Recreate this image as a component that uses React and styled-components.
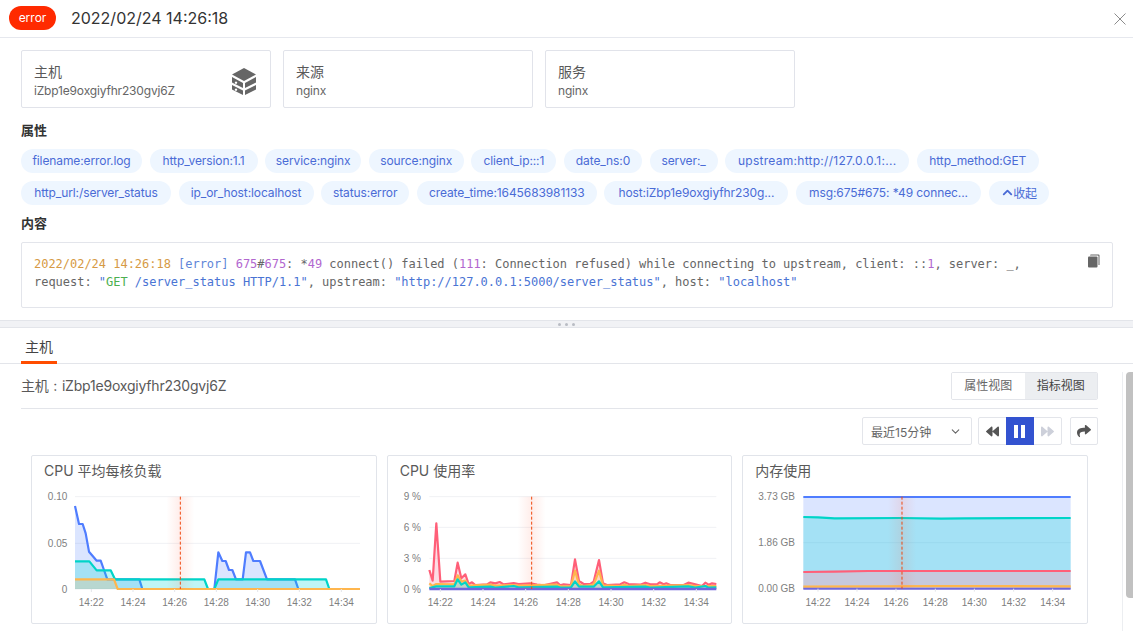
import React from 'react'
import styled, { createGlobalStyle } from 'styled-components'
import { FaBackward, FaForward, FaShare } from 'react-icons/fa'
import { ChevronDown, ChevronUp } from 'lucide-react'

const GlobalStyle = createGlobalStyle`
  html, body { margin: 0; padding: 0; background: #fff; }
  body { font-family: Inter, "Noto Sans CJK SC", sans-serif; color: #333; }
  * { box-sizing: border-box; }
`

const Page = styled.div`
  width: 1133px;
  height: 631px;
  overflow: hidden;
  display: flex;
  flex-direction: column;
`
const Header = styled.header`
  height: 38px;
  flex: none;
  display: flex;
  align-items: center;
  padding: 0 7px 2px 9px;
  border-bottom: 1px solid #e6e8ee;
`
const ErrorPill = styled.span`
  width: 47px;
  height: 24px;
  border-radius: 12px;
  background: #ff2a00;
  color: #fff;
  font-size: 12px;
  display: flex;
  align-items: center;
  justify-content: center;
`
const Stamp = styled.span`
  margin-left: 15px;
  font-size: 16px;
  color: #333;
`
const Close = styled.svg`
  margin-left: auto;
  margin-top: 2px;
  width: 12px;
  height: 12px;
`
const Detail = styled.section`
  flex: none;
  height: 282px;
  padding: 12px 20px 0 21px;
`
const InfoRow = styled.div`
  display: flex;
  gap: 12px;
`
const InfoCard = styled.div`
  width: 250px;
  height: 58px;
  border: 1px solid #e1e3ea;
  border-radius: 2px;
  padding: 12px 12px 0;
  position: relative;
`
const InfoTitle = styled.div`
  font-size: 14px;
  line-height: 18px;
  color: #595959;
`
const InfoValue = styled.div`
  margin-top: 1px;
  font-size: 12px;
  line-height: 18px;
  letter-spacing: -0.17px;
  color: #666;
`
const CubeIcon = styled.svg`
  position: absolute;
  right: 13px;
  top: 17px;
  width: 26px;
  height: 27px;
`
const SectionTitle = styled.h4`
  margin: ${(p) => p.$top}px 0 0;
  font-size: 13px;
  line-height: 18px;
  font-weight: 600;
  color: #333;
`
const Tags = styled.div`
  display: flex;
  flex-wrap: wrap;
  gap: 8px 7.6px;
  margin-top: 10px;
`
const Tag = styled.span`
  width: ${(p) => p.$w}px;
  height: 24px;
  padding-bottom: 1px;
  border-radius: 12px;
  background: #eef6ff;
  color: #4a6bd6;
  font-size: 12px;
  letter-spacing: ${(p) => p.$spread || -0.1}px;
  white-space: nowrap;
  display: inline-flex;
  align-items: center;
  justify-content: center;
`
const CollapseIcon = styled(ChevronUp)`
  margin-right: -2px;
`
const CodeBox = styled.div`
  position: relative;
  margin-top: 10px;
  height: 66px;
  border: 1px solid #e3e5eb;
  border-radius: 2px;
  padding: 12px 12px 0;
  font-family: "DejaVu Sans Mono", monospace;
  font-size: 12px;
  line-height: 18px;
  letter-spacing: -0.022px;
  color: #666;
  white-space: pre;
`
const CopyIcon = styled.svg`
  position: absolute;
  top: 11px;
  right: 12px;
  width: 13px;
  height: 14px;
`
const Time = styled.span`color: #d69a45;`
const Level = styled.span`color: #5f86d8;`
const Num = styled.span`color: #b267cf;`
const Str = styled.span`color: #4a74d4;`
const Verb = styled.span`color: #4caf50;`

const Splitter = styled.div`
  flex: none;
  height: 8px;
  background: #f1f2f5;
  border-top: 1px solid #e3e5ea;
  border-bottom: 1px solid #e3e5ea;
  display: flex;
  align-items: center;
  justify-content: center;
  gap: 4px;
`
const Dot = styled.i`
  width: 3px;
  height: 3px;
  border-radius: 50%;
  background: #b9bcc4;
`
const Tabs = styled.nav`
  flex: none;
  height: 36px;
  padding-left: 21px;
  display: flex;
  align-items: flex-end;
  border-bottom: 1px solid #e3e5ea;
`
const TabItem = styled.div`
  width: 36px;
  height: 36px;
  margin-bottom: -1px;
  text-align: center;
  font-size: 14px;
  line-height: 38px;
  color: #444;
  border-bottom: 3px solid #ff4d00;
`
const Lower = styled.div`
  flex: 1;
  min-height: 0;
  display: flex;
`
const Content = styled.div`
  flex: none;
  width: 1122px;
  padding: 0 24px 0 21px;
`
const HostHead = styled.div`
  height: 45px;
  padding-top: 8px;
  display: flex;
  align-items: flex-start;
  justify-content: space-between;
  border-bottom: 1px solid #e3e5ea;
`
const HostName = styled.div`
  font-size: 14px;
  line-height: 28px;
  letter-spacing: -0.2px;
  word-spacing: 1px;
  color: #595959;
`
const ViewSwitch = styled.div`
  display: flex;
  height: 28px;
  width: 147px;
  border: 1px solid #e3e5ea;
  border-radius: 2px;
  overflow: hidden;
`
const ViewOption = styled.div`
  flex: 1;
  font-size: 12px;
  line-height: 26px;
  text-align: center;
  color: ${(p) => (p.$active ? '#444' : '#666')};
  background: ${(p) => (p.$active ? '#eceef1' : '#fff')};
`
const Controls = styled.div`
  margin-top: 8px;
  height: 28px;
  display: flex;
  justify-content: flex-end;
  gap: 8px;
`
const RangeSelect = styled.div`
  width: 110px;
  margin-right: -2px;
  border: 1px solid #e3e5ea;
  border-radius: 2px;
  padding: 0 9px 0 8px;
  display: flex;
  align-items: center;
  justify-content: space-between;
  font-size: 12px;
  color: #666;
`
const PlayGroup = styled.div`
  display: flex;
  width: 84px;
  border: 1px solid #e3e5ea;
  border-radius: 2px;
`
const PlayButton = styled.div`
  flex: 1;
  margin: ${(p) => (p.$active ? '-1px 0' : '0')};
  display: flex;
  align-items: center;
  justify-content: center;
  gap: 3px;
  background: ${(p) => (p.$active ? '#3353d0' : 'transparent')};
  color: ${(p) => (p.$muted ? '#cdd0da' : '#555')};
  font-size: 13px;
`
const PauseBar = styled.i`
  width: 4px;
  height: 13px;
  background: #fff;
`
const ShareButton = styled.div`
  width: 28px;
  border: 1px solid #e3e5ea;
  border-radius: 2px;
  display: flex;
  align-items: center;
  justify-content: center;
  color: #555;
  font-size: 14px;
`
const ChartGrid = styled.div`
  margin: 10px 10px 0 10px;
  display: grid;
  grid-template-columns: repeat(3, 1fr);
  gap: 10px;
`
const ChartCard = styled.div`
  height: 169px;
  border: 1px solid #e1e4ea;
  border-radius: 2px;
  overflow: hidden;
`
const ChartTitle = styled.div`
  height: 30px;
  padding: 5px 0 0 12px;
  font-size: 14px;
  line-height: 20px;
  color: #595959;
`
const Plot = styled.svg`
  display: block;
  font-family: "Liberation Sans", Arial, sans-serif;
  font-size: 10px;
`
const Track = styled.div`
  flex: 1;
  margin-top: 8px;
  border-left: 1px solid #eceef1;
  padding: 0 0 0 3px;
`
const Thumb = styled.div`
  width: 8px;
  height: 226px;
  background: #c1c1c1;
  border-radius: 4px 0 0 4px;
`

const tags = [
  ['filename:error.log', 121], ['http_version:1.1', 108], ['service:nginx', 96], ['source:nginx', 95], ['client_ip:::1', 85],
  ['date_ns:0', 78], ['server:_', 68], ['upstream:http://127.0.0.1:...', 184, 0.28], ['http_method:GET', 122],
  ['http_url:/server_status', 150], ['ip_or_host:localhost', 135], ['status:error', 88], ['create_time:1645683981133', 180],
  ['host:iZbp1e9oxgiyfhr230g...', 184], ['msg:675#675: *49 connec...', 185],
]
const labels = ['14:22', '14:24', '14:26', '14:28', '14:30', '14:32', '14:34']

const BLUE = { line: '#4f7dff', fill: 'rgba(74,125,255,.2)' }
const TEAL = { line: '#00d4c8', fill: 'rgba(0,214,216,.25)' }
const ORANGE = { line: '#ffb64d', fill: 'rgba(255,182,77,.22)' }
const RED = { line: '#ff5f78', fill: 'rgba(250,166,185,.4)' }
const PURPLE = { line: '#6f66dc', fill: 'none' }

const loadChart = {
  title: 'CPU 平均每核负载',
  origin: [20, 450],
  left: [165, 1020],
  axisRight: 142,
  grid: [[140, '0.10'], [280, '0.05'], [417, '0']],
  ticks: [214, 339, 464, 589, 713, 838, 964],
  marker: 481,
  series: [
    { ...BLUE, pts: [[165,168],[177,222],[188,222],[197,250],[207,305],[218,318],[230,332],[242,332],[252,360],[262,388],[358,388],[367,417],[583,417],[595,307],[607,333],[617,333],[627,360],[637,360],[648,388],[668,388],[678,307],[690,307],[700,333],[720,333],[741,388],[825,388],[835,417],[1020,417]] },
    { ...TEAL, pts: [[165,334],[208,334],[230,361],[272,361],[285,388],[553,388],[564,417],[583,417],[595,388],[918,388],[928,417],[1020,417]] },
    { ...ORANGE, pts: [[165,388],[282,388],[293,417],[1020,417]] },
  ],
}
const cpuChart = {
  title: 'CPU 使用率',
  origin: [380, 450],
  left: [147, 1008],
  axisRight: 122,
  grid: [[140, '9 %'], [232, '6 %'], [325, '3 %'], [417, '0 %']],
  ticks: [180, 308, 436, 564, 692, 820, 948],
  marker: 454,
  series: [
    { ...RED, pts: [[147,360],[157,392],[168,220],[180,395],[222,393],[232,338],[243,385],[255,373],[265,402],[275,397],[285,405],[320,403],[330,397],[345,400],[358,396],[370,403],[400,399],[415,402],[450,400],[470,404],[490,406],[530,397],[540,406],[550,403],[572,405],[584,328],[596,393],[610,402],[630,402],[640,395],[656,330],[668,400],[680,405],[720,403],[732,397],[745,402],[780,404],[795,398],[810,403],[830,403],[838,397],[850,403],[858,400],[870,405],[910,405],[924,398],[945,403],[965,408],[975,398],[985,404],[995,400],[1008,402]] },
    { ...ORANGE, pts: [[147,400],[157,408],[168,402],[222,403],[232,376],[243,395],[255,392],[265,407],[330,404],[345,407],[400,405],[415,407],[530,404],[540,409],[572,408],[584,362],[596,404],[610,408],[640,404],[656,362],[668,406],[720,408],[732,404],[745,408],[795,405],[810,408],[924,405],[945,408],[1008,408]] },
    { ...TEAL, pts: [[147,414],[168,409],[222,409],[232,388],[243,404],[255,397],[265,412],[330,410],[345,413],[400,408],[415,412],[530,410],[540,413],[572,412],[584,394],[596,410],[640,410],[656,394],[668,412],[795,410],[810,413],[924,409],[945,413],[975,408],[985,413],[1008,412]] },
    { ...PURPLE, width: 2.5, pts: [[147,417],[1008,417]] },
  ],
}
const memChart = {
  title: '内存使用',
  origin: [735, 450],
  left: [206, 1008],
  axisRight: 181,
  grid: [[140, '3.73 GB'], [278, '1.86 GB'], [416, '0.00 GB']],
  ticks: [250, 367, 484, 602, 719, 837, 954],
  marker: 502,
  series: [
    { ...BLUE, pts: [[206,141],[1008,141]] },
    { ...TEAL, pts: [[206,201],[250,202],[300,205],[500,204],[620,206],[690,205],[1008,204]] },
    { ...RED, pts: [[206,366],[300,365],[400,363],[1008,363]] },
    { ...ORANGE, pts: [[206,410],[620,408],[1008,409]] },
    { ...PURPLE, width: 2, pts: [[206,416],[1008,416]] },
  ],
}

const Chart = ({ id, data, index }) => {
  // the svg starts 31px below the card top and 1px inside its border
  const cardLeft = 31 + index * 355.67 + 1
  const ox = data.origin[0] - cardLeft
  const oy = data.origin[1] - 486
  const X = (v) => +(ox + v / 3).toFixed(2)
  const Y = (v) => +(oy + v / 3).toFixed(2)
  const base = data.grid[data.grid.length - 1][0]
  const line = (pts) => pts.map(([x, y]) => `${X(x)},${Y(y)}`).join(' ')
  return (
    <ChartCard>
      <ChartTitle>{data.title}</ChartTitle>
      <Plot width="344" height="137">
        <defs>
          <linearGradient id={id}>
            <stop offset="0" stopColor="#ff5a3c" stopOpacity="0" />
            <stop offset="0.5" stopColor="#ff5a3c" stopOpacity="0.11" />
            <stop offset="1" stopColor="#ff5a3c" stopOpacity="0" />
          </linearGradient>
        </defs>
        {data.grid.map(([y, label]) => (
          <g key={label}>
            <line x1={X(data.left[0])} x2={X(data.left[1])} y1={Y(y)} y2={Y(y)} stroke="#f0f1f4" />
            <text x={X(data.axisRight)} y={Y(y) + 3.5} textAnchor="end" fill="#808080">{label}</text>
          </g>
        ))}
        {data.series.map((s, i) => (
          <g key={i}>
            {s.fill !== 'none' && (
              <polygon
                fill={s.fill}
                points={`${line(s.pts)} ${X(s.pts[s.pts.length - 1][0])},${Y(base)} ${X(s.pts[0][0])},${Y(base)}`}
              />
            )}
            <polyline fill="none" stroke={s.line} strokeWidth={s.width || 2.2} strokeLinejoin="round" points={line(s.pts)} />
          </g>
        ))}
        <rect x={X(data.marker) - 14} y={Y(140)} width="28" height={Y(base) - Y(140)} fill={`url(#${id})`} />
        <line x1={X(data.marker)} x2={X(data.marker)} y1={Y(140)} y2={Y(base)} stroke="#f0490f" strokeDasharray="3 2" />
        {data.ticks.map((t, i) => (
          <g key={t}>
            <line x1={X(t)} x2={X(t)} y1={Y(base)} y2={Y(base) + 3} stroke="#e3e5ea" />
            <text x={X(t)} y={Y(base) + 17} textAnchor="middle" fill="#808080">{labels[i]}</text>
          </g>
        ))}
      </Plot>
    </ChartCard>
  )
}

export default function App() {
  return (
    <Page>
      <GlobalStyle />
      <Header>
        <ErrorPill>error</ErrorPill>
        <Stamp>2022/02/24 14:26:18</Stamp>
        <Close viewBox="0 0 12 12">
          <path d="M0.5 0.5 L11.5 11.5 M11.5 0.5 L0.5 11.5" stroke="#8c8c8c" fill="none" />
        </Close>
      </Header>
      <Detail>
        <InfoRow>
          <InfoCard>
            <InfoTitle>主机</InfoTitle>
            <InfoValue>iZbp1e9oxgiyfhr230gvj6Z</InfoValue>
            <CubeIcon viewBox="0 0 26 27" fill="#666">
              <path d="M13 0 L25 6.5 L13 13 L1 6.5Z" />
              <path fillRule="evenodd" d="M1 9 L12 15 V20 L1 14.5Z M5 13.5 a1.2 1.2 0 1 0 .01 0Z" />
              <path d="M25 9 L14 15 V20 L25 14.5Z" />
              <path fillRule="evenodd" d="M1 17 L12 22.5 V27 L1 21.5Z M5 20.5 a1.2 1.2 0 1 0 .01 0Z" />
              <path d="M25 17 L14 22.5 V27 L25 21.5Z" />
            </CubeIcon>
          </InfoCard>
          <InfoCard>
            <InfoTitle>来源</InfoTitle>
            <InfoValue>nginx</InfoValue>
          </InfoCard>
          <InfoCard>
            <InfoTitle>服务</InfoTitle>
            <InfoValue>nginx</InfoValue>
          </InfoCard>
        </InfoRow>
        <SectionTitle $top={13}>属性</SectionTitle>
        <Tags>
          {tags.map(([t, w, spread]) => <Tag key={t} $w={w} $spread={spread}>{t}</Tag>)}
          <Tag $w={60}><CollapseIcon size={15} strokeWidth={3} color="#4a6bd6" />收起</Tag>
        </Tags>
        <SectionTitle $top={9}>内容</SectionTitle>
        <CodeBox>
          <Time>2022/02/24 14:26:18</Time> <Level>[error]</Level> <Num>675</Num>#<Num>675</Num>: *<Num>49</Num> connect() failed (<Num>111</Num>: Connection refused) while connecting to upstream, client: ::<Num>1</Num>, server: _,{'\n'}
          request: <Str>"</Str><Verb>GET</Verb><Str> /server_status HTTP/1.1"</Str>, upstream: <Str>"http://127.0.0.1:5000/server_status"</Str>, host: <Str>"localhost"</Str>
          <CopyIcon viewBox="0 0 13 14" fill="#666">
            <path d="M3 1.5 Q3 .5 4 .5 H11.5 Q12.5 .5 12.5 1.5 V11 H11.5 V2 Q11.5 1.5 11 1.5Z" />
            <rect x="1" y="2.5" width="9.5" height="11" rx="1" />
          </CopyIcon>
        </CodeBox>
      </Detail>
      <Splitter><Dot /><Dot /><Dot /></Splitter>
      <Tabs><TabItem>主机</TabItem></Tabs>
      <Lower>
        <Content>
          <HostHead>
            <HostName>主机 : iZbp1e9oxgiyfhr230gvj6Z</HostName>
            <ViewSwitch>
              <ViewOption>属性视图</ViewOption>
              <ViewOption $active>指标视图</ViewOption>
            </ViewSwitch>
          </HostHead>
          <Controls>
            <RangeSelect>最近15分钟<ChevronDown size={13} color="#666" /></RangeSelect>
            <PlayGroup>
              <PlayButton><FaBackward /></PlayButton>
              <PlayButton $active><PauseBar /><PauseBar /></PlayButton>
              <PlayButton $muted><FaForward /></PlayButton>
            </PlayGroup>
            <ShareButton><FaShare /></ShareButton>
          </Controls>
          <ChartGrid>
            <Chart id="glow-load" data={loadChart} index={0} />
            <Chart id="glow-cpu" data={cpuChart} index={1} />
            <Chart id="glow-mem" data={memChart} index={2} />
          </ChartGrid>
        </Content>
        <Track><Thumb /></Track>
      </Lower>
    </Page>
  )
}
